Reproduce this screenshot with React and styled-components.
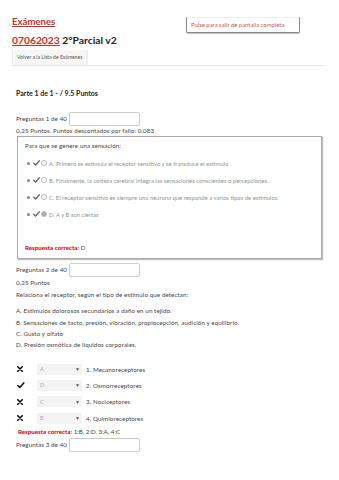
import React from "react"
import styled, { createGlobalStyle } from "styled-components"

const GlobalStyle = createGlobalStyle`
  body {
    margin: 0;
    background: #fff;
    font-family: Lato, "Open Sans", sans-serif;
    color: #444;
  }
`

const options = [
  { text: "A. Primero se estimula el receptor sensitivo y se transduce el estimulo." },
  { text: "B. Finalmente, la corteza cerebral integra las sensaciones conscientes o percepciones." },
  { text: "C. El receptor sensitivo es siempre una neurona que responde a varios tipos de estímulos." },
  { text: "D. A y B son ciertas", checked: true },
]

const stimuli = [
  "A. Estimulos dolorosos secundarios a daño en un tejido.",
  "B. Sensaciones de tacto, presión, vibración, propiocepción, audición y equilibrio.",
  "C. Gusto y olfato",
  "D. Presión osmótica de liquidos corporales.",
]

const matches = [
  { ok: false, value: "A", label: "1. Mecanoreceptores" },
  { ok: true, value: "D", label: "2. Osmorreceptores" },
  { ok: false, value: "C", label: "3. Nociceptores" },
  { ok: false, value: "B", label: "4. Quimioreceptores" },
]

function CheckIcon({ color = "#666", size = 7 }) {
  return (
    <svg width={size} height={size * 0.85} viewBox="0 0 8 7">
      <path d="M0.8 3.9 L3 6 L7.3 1" fill="none" stroke={color} strokeWidth="1.7" strokeLinecap="round" strokeLinejoin="round" />
    </svg>
  )
}

function CrossIcon() {
  return (
    <svg width="6" height="6" viewBox="0 0 6 6">
      <path d="M0.8 0.8 L5.2 5.2 M5.2 0.8 L0.8 5.2" stroke="#111" strokeWidth="1.6" strokeLinecap="round" />
    </svg>
  )
}

function App() {
  return (
    <Page>
      <GlobalStyle />
      <Header>
        <HeaderTop>
          <BackLink href="#">Exámenes</BackLink>
          <ExitButton>Pulse para salir de pantalla completa</ExitButton>
        </HeaderTop>
        <Title>
          <Code href="#">07062023</Code> 2°Parcial v2
        </Title>
        <Tabs>
          <Tab>Volver a la Lista de Exámenes</Tab>
        </Tabs>
      </Header>

      <Content>
        <Part>Parte 1 de 1 - / 9.5 Puntos</Part>

        <QuestionHead>
          Preguntas 1 de 40 <NumInput />
        </QuestionHead>
        <Points>0.25 Puntos. Puntos descontados por fallo: 0.083</Points>
        <QuestionBox>
          <Prompt>Para que se genere una sensación:</Prompt>
          <OptionList>
            {options.map((o) => (
              <Option key={o.text}>
                <Dot />
                <CheckIcon />
                <Radio $checked={o.checked} />
                <OptionText>{o.text}</OptionText>
              </Option>
            ))}
          </OptionList>
          <Answer>
            <AnswerLabel>Respuesta correcta:</AnswerLabel> D
          </Answer>
        </QuestionBox>

        <QuestionHead>
          Preguntas 2 de 40 <NumInput />
        </QuestionHead>
        <Line>0.25 Puntos</Line>
        <Line>Relaciona el receptor, según el tipo de estimulo que detectan:</Line>
        <Stimuli>
          {stimuli.map((s) => (
            <StimulusLine key={s}>{s}</StimulusLine>
          ))}
        </Stimuli>
        <MatchList>
          {matches.map((m) => (
            <MatchRow key={m.label}>
              <Mark>{m.ok ? <CheckIcon color="#111" size={7.5} /> : <CrossIcon />}</Mark>
              <SelectBox>
                <span>{m.value}</span>
                <Arrow>▼</Arrow>
              </SelectBox>
              <MatchLabel>{m.label}</MatchLabel>
            </MatchRow>
          ))}
        </MatchList>
        <Answer2>
          <AnswerLabel>Respuesta correcta:</AnswerLabel> 1:B, 2:D, 3:A, 4:C
        </Answer2>

        <QuestionHead>
          Preguntas 3 de 40 <NumInput />
        </QuestionHead>
      </Content>
    </Page>
  )
}

export default App

const Page = styled.div`
  width: 339px;
  min-height: 480px;
  padding-top: 15px;
  box-sizing: border-box;
`

const Header = styled.div`
  margin: 0 14px 0 12px;
  border-bottom: 1px solid #e6e6e6;
`

const HeaderTop = styled.div`
  display: flex;
  align-items: flex-start;
  justify-content: space-between;
  height: 18px;
`

const BackLink = styled.a`
  color: #c9302c;
  font-size: 9.6px;
  font-weight: 700;
  line-height: 14px;
  text-decoration: underline;
`

const ExitButton = styled.div`
  margin: 2px 25px 0 0;
  height: 16px;
  width: 114px;
  box-sizing: border-box;
  border: 1px solid #888;
  border-top-color: #eee;
  border-radius: 0 0 2px 2px;
  box-shadow: 0 1px 1px rgba(0, 0, 0, 0.25);
  color: #d9534f;
  font-size: 5.9px;
  line-height: 14px;
  padding-left: 4px;
  white-space: nowrap;
`

const Title = styled.h1`
  margin: 0;
  font-size: 10.3px;
  font-weight: 700;
  line-height: 15px;
  color: #222;
`

const Code = styled.a`
  color: #c9302c;
  text-decoration: underline;
`

const Tabs = styled.div`
  display: flex;
  margin-top: 2px;
`

const Tab = styled.div`
  background: #f6f6f6;
  border-left: 1px solid #ececec;
  border-right: 1px solid #ececec;
  font-size: 5.1px;
  line-height: 15px;
  color: #555;
  padding: 0 4px;
`

const Content = styled.div`
  padding: 0 16px;
`

const Part = styled.div`
  margin-top: 21px;
  font-size: 7px;
  font-weight: 700;
  line-height: 12px;
  color: #222;
`

const QuestionHead = styled.div`
  display: flex;
  align-items: center;
  gap: 2px;
  height: 15px;
  font-size: 6.2px;
  letter-spacing: 0.1px;

  ${Part} + & {
    margin-top: 12px;
  }
`

const NumInput = styled.div`
  width: 71px;
  height: 14px;
  box-sizing: border-box;
  border: 1px solid #ccc;
  border-radius: 2px;
  background: #fff;
`

const Points = styled.div`
  font-size: 6.2px;
  letter-spacing: 0.1px;
  line-height: 9px;
`

const QuestionBox = styled.div`
  margin: 1px 0 3px 1px;
  width: 305px;
  box-sizing: border-box;
  border: 1px solid #aaa;
  box-shadow: 1px 1px 1px rgba(0, 0, 0, 0.25);
  padding: 5px 7px 5px;
`

const Prompt = styled.div`
  font-size: 6.2px;
  letter-spacing: 0.1px;
  line-height: 8px;
`

const OptionList = styled.div`
  margin-top: 4.5px;
  display: flex;
  flex-direction: column;
`

const Option = styled.div`
  display: flex;
  align-items: center;
  height: 17px;
  padding-left: 2px;
`

const Dot = styled.span`
  width: 3px;
  height: 3px;
  border-radius: 50%;
  background: #888;
  margin-right: 3px;
`

const Radio = styled.span`
  width: 6px;
  height: 6px;
  border-radius: 50%;
  box-sizing: border-box;
  border: 1px solid #bbb;
  background: ${(p) => (p.$checked ? "#aaa" : "#fff")};
  margin: 0 2px 0 1px;
`

const OptionText = styled.span`
  font-size: 5.9px;
  color: #949494;
`

const Answer = styled.div`
  margin-top: 20.5px;
  font-size: 6.2px;
  line-height: 10px;
`

const AnswerLabel = styled.span`
  color: #c00;
  font-weight: 700;
`

const Line = styled.div`
  font-size: 6.2px;
  letter-spacing: 0.1px;
  line-height: 12px;
`

const Stimuli = styled.div`
  margin-top: 4.4px;
`

const StimulusLine = styled.div`
  font-size: 6.2px;
  letter-spacing: 0.1px;
  line-height: 11.3px;
`

const MatchList = styled.div`
  margin-top: 10.4px;
`

const MatchRow = styled.div`
  display: flex;
  align-items: center;
  height: 16.3px;
`

const Mark = styled.span`
  display: flex;
  width: 21px;
  padding-left: 1px;
  box-sizing: border-box;
`

const SelectBox = styled.div`
  display: flex;
  align-items: center;
  justify-content: space-between;
  width: 45px;
  height: 11px;
  box-sizing: border-box;
  padding: 0 2px 0 3px;
  background: #f3f3f3;
  font-size: 5.5px;
  color: #aaa;
`

const Arrow = styled.span`
  font-size: 5px;
  color: #555;
`

const MatchLabel = styled.span`
  margin-left: 4px;
  font-size: 6.2px;
  letter-spacing: 0.1px;
`

const Answer2 = styled.div`
  margin: 1px 0 0 2px;
  font-size: 6.2px;
  line-height: 10px;
`
